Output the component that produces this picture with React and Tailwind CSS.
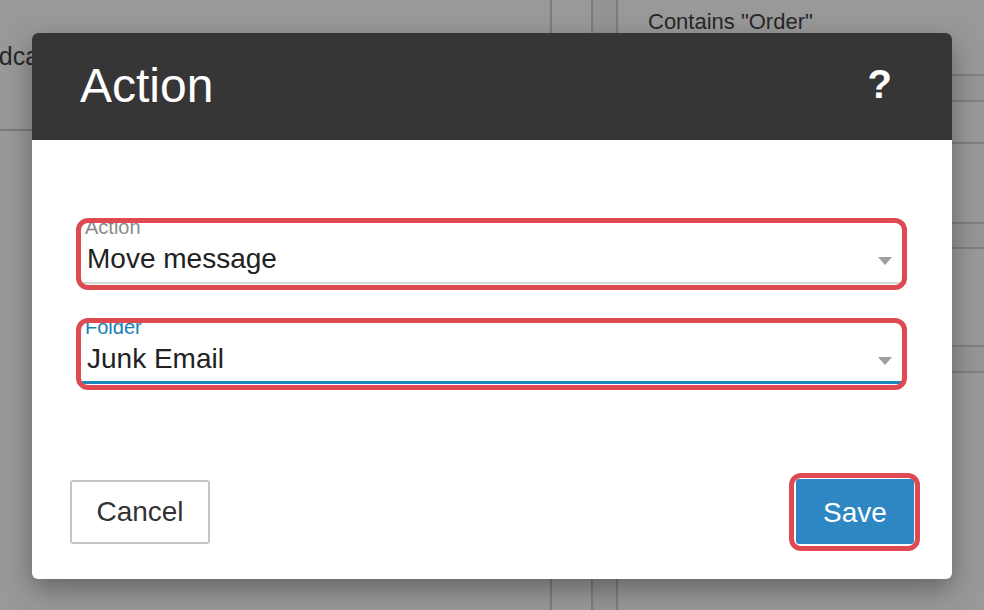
import React from 'react';

function Caret() {
  return (
    <svg width="14" height="8" viewBox="0 0 14 8" className="mt-[4px] shrink-0">
      <path d="M0 0 L14 0 L7 8 Z" fill="#9e9e9e" />
    </svg>
  );
}

// red annotation ring drawn over a control
function Highlight({ className }) {
  return (
    <div
      className={
        'pointer-events-none absolute rounded-[12px] border-[5px] border-[#df4a52] ' + className
      }
    />
  );
}

function SelectField({ label, value, active }) {
  return (
    <div className="relative">
      <div
        className={
          active
            ? 'border-b-[3px] border-[#1d86bf] pb-[6px]'
            : 'border-b-2 border-[#d9d9d9] pb-[7px]'
        }
      >
        <div
          className={
            'pl-[5px] pt-[2px] text-[20px] leading-[20px] ' +
            (active ? 'text-[#1a7db3]' : 'text-[#8a8a8a]')
          }
        >
          {label}
        </div>
        <div className="mt-[6px] flex items-center justify-between pl-[7px] pr-[12px]">
          <span className="text-[28px] leading-[32px] text-[#222]">{value}</span>
          <Caret />
        </div>
      </div>
      <Highlight className="-left-[4px] -right-[3px] top-[3px] -bottom-[6px]" />
    </div>
  );
}

export default function App() {
  return (
    <div className="relative h-[610px] w-[984px] overflow-hidden bg-white font-['Liberation_Sans',Arial,sans-serif]">
      {/* page behind the dialog */}
      <div className="flex h-full">
        <div className="w-[552px] border-r-2 border-[#d0d0d0]">
          <div className="h-[131px] overflow-hidden border-b-2 border-[#cccccc] pt-[40px]">
            <div className="-ml-[54px] whitespace-nowrap text-[25px] leading-[32px] text-[#444]">
              Broadcast
            </div>
          </div>
        </div>
        <div className="w-[41px] border-r-2 border-[#d0d0d0]" />
        <div className="w-[25px] border-r-2 border-[#d0d0d0] bg-[#f7f7f7]" />
        <div className="flex-1">
          <div className="h-[76px] border-b-2 border-[#d6d6d6] pl-[30px] pt-[8px] text-[22px] leading-[28px] text-[#444]">
            Contains "Order"
          </div>
          <div className="h-[26px] border-b-2 border-[#d6d6d6] bg-[#fafafa]" />
          <div className="h-[42px] border-b-2 border-[#d6d6d6]" />
          <div className="h-[80px] border-b-2 border-[#d6d6d6]" />
          <div className="h-[25px] border-b-2 border-[#d6d6d6] bg-[#fafafa]" />
          <div className="h-[98px] border-b-2 border-[#d6d6d6]" />
          <div className="h-[26px] border-b-2 border-[#d6d6d6] bg-[#fafafa]" />
        </div>
      </div>

      {/* backdrop */}
      <div className="absolute inset-0 bg-black/40" />

      {/* dialog */}
      <div className="absolute left-[32px] top-[33px] w-[920px] overflow-hidden rounded-[6px] bg-white shadow-[0_10px_28px_rgba(0,0,0,0.35)]">
        <div className="flex h-[107px] items-center justify-between bg-[#363636] pl-[48px] pr-[60px]">
          <h1 className="mb-[2px] text-[48px] leading-none text-white">Action</h1>
          <span className="mb-[6px] text-[40px] font-bold leading-none text-white">?</span>
        </div>

        <div className="px-[48px] pt-[75px]">
          <SelectField label="Action" value="Move message" />
          <div className="mt-[31px]">
            <SelectField label="Folder" value="Junk Email" active />
          </div>
        </div>

        <div className="mt-[95px] flex items-center justify-between px-[38px] pb-[35px]">
          <button className="h-[64px] w-[140px] rounded-[3px] border-2 border-[#c4c4c4] bg-white text-[28px] text-[#333]">
            Cancel
          </button>
          <div className="relative">
            <button className="h-[65px] w-[118px] rounded-[3px] bg-[#2e86c3] pt-[2px] text-[28px] text-white">
              Save
            </button>
            <Highlight className="-left-[7px] -right-[6px] -top-[6px] -bottom-[7px]" />
          </div>
        </div>
      </div>
    </div>
  );
}
